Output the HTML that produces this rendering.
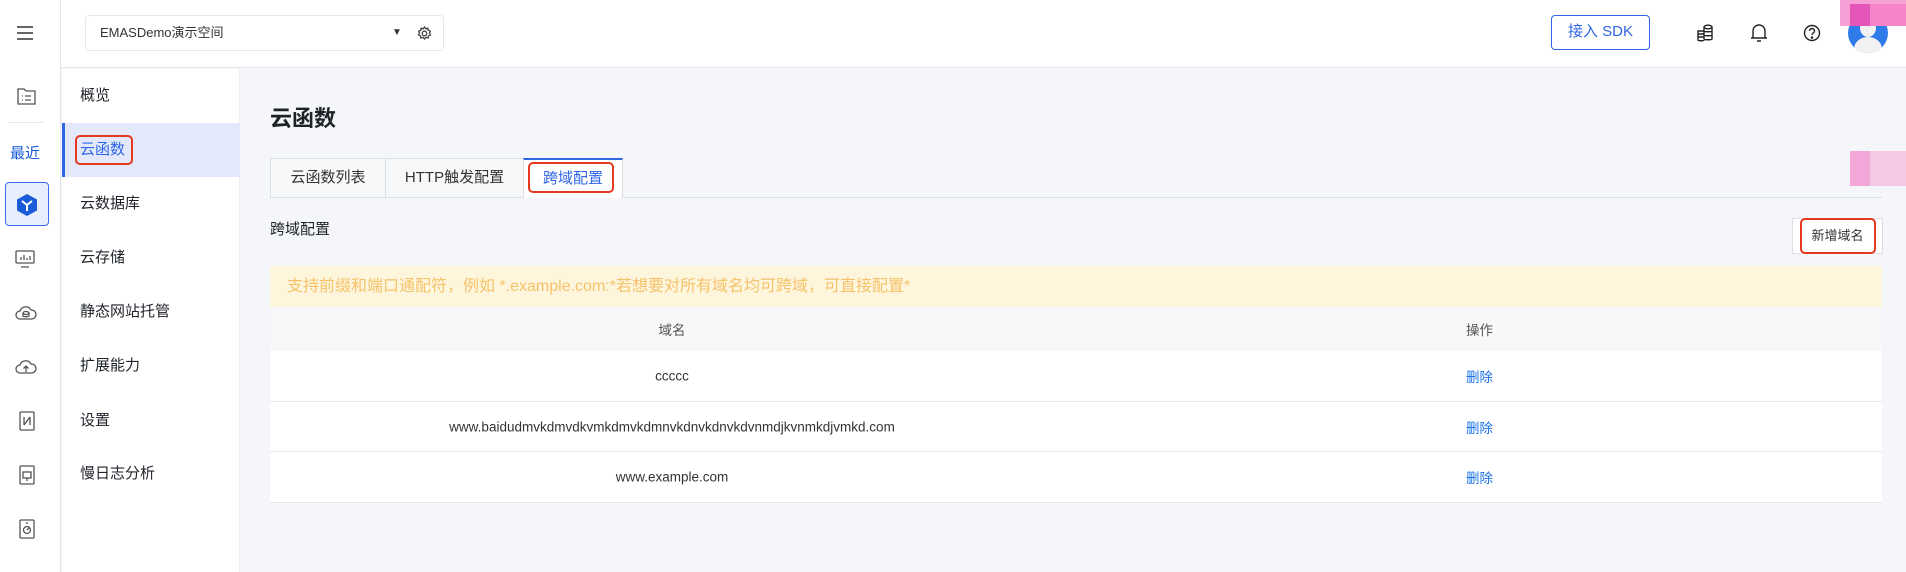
<!DOCTYPE html>
<html><head><meta charset="utf-8"><style>
*{box-sizing:border-box;margin:0;padding:0}
body{width:1906px;height:572px;overflow:hidden;background:#f5f6f9;font-family:"Liberation Sans","Noto Sans CJK SC",sans-serif;color:#1f2329;position:relative}
.abs{position:absolute}
.rail{left:0;top:0;width:61px;height:572px;background:#fff;border-right:1px solid #e3e6ec}
.top{left:61px;top:0;width:1845px;height:68px;background:#fff;border-bottom:1px solid #e3e8f0}
.sub{left:62px;top:69px;width:178px;height:503px;background:#fff;border-right:1px solid #eceef2}
.mi{position:absolute;left:18px;font-size:15px;color:#1f2329;line-height:20px}
.tab{position:absolute;top:158px;height:40px;border:1px solid #dcdfe6;background:#f7f8fa;font-size:15px;color:#333;text-align:center;line-height:38px}
.red{border:2px solid #e5391f;border-radius:5px;position:absolute}
.row{position:absolute;left:270px;width:1612px;background:#fff;border-bottom:1px solid #e8e8e8;font-size:13.5px;color:#333}
.row span{position:absolute;top:50%;transform:translateY(-50%);white-space:nowrap}
.row span.c{left:402px;transform:translate(-50%,-50%)}
.del{left:1196px;color:#1a73e8}
</style></head><body>
<div class="abs rail">
 <svg class="abs" style="left:16px;top:25px" width="18" height="16"><path d="M1 2h16M1 8h16M1 14h16" stroke="#333" stroke-width="1.6"/></svg>
 <svg class="abs" style="left:17px;top:87px" width="20" height="18" fill="none" stroke="#555" stroke-width="1.3"><path d="M1 2h6l2 2h9v13H1z"/><path d="M5 9h1M5 13h1M8 9h6M8 13h6"/></svg>
 <div class="abs" style="left:8px;top:122px;width:36px;height:1px;background:#e3e6ec"></div>
 <div class="abs" style="left:10px;top:142px;font-size:15px;color:#1a5bd8">最近</div>
 <div class="abs" style="left:5px;top:182px;width:44px;height:44px;border:1.5px solid #3a6ff0;border-radius:4px;background:#e9eefc"></div>
 <svg class="abs" style="left:16px;top:193px" width="22" height="24"><path d="M11 1l10 5.5v11L11 23 1 17.5v-11z" fill="#1a5bd8"/><path d="M6 8l5 4 5-4M11 12v6" stroke="#fff" stroke-width="2" fill="none"/></svg>
 <svg class="abs" style="left:15px;top:250px" width="20" height="18" fill="none" stroke="#555" stroke-width="1.3"><rect x="1" y="1" width="18" height="12" rx="1"/><path d="M6 17h8M6 10V7M9 10V5M12 10V8M15 10V6"/></svg>
 <svg class="abs" style="left:15px;top:304px" width="22" height="16" fill="none" stroke="#555" stroke-width="1.3"><path d="M5 15a4 4 0 010-8 6 6 0 0111-1 4 4 0 011 9z"/><ellipse cx="11" cy="9" rx="3" ry="1.5"/><path d="M8 9v3c0 1 6 1 6 0V9"/></svg>
 <svg class="abs" style="left:15px;top:358px" width="22" height="16" fill="none" stroke="#555" stroke-width="1.3"><path d="M5 15a4 4 0 010-8 6 6 0 0111-1 4 4 0 011 9z"/><path d="M11 14V8M8.5 10.5L11 8l2.5 2.5"/></svg>
 <svg class="abs" style="left:19px;top:411px" width="16" height="20" fill="none" stroke="#555" stroke-width="1.3"><rect x="1" y="1" width="14" height="18" rx="1"/><path d="M5 6v8M11 6v8M5 14l6-8"/></svg>
 <svg class="abs" style="left:19px;top:465px" width="16" height="20" fill="none" stroke="#555" stroke-width="1.3"><rect x="1" y="1" width="14" height="18" rx="1"/><rect x="4" y="7" width="8" height="6"/><path d="M8 13v3"/></svg>
 <svg class="abs" style="left:19px;top:519px" width="16" height="20" fill="none" stroke="#555" stroke-width="1.3"><rect x="1" y="1" width="14" height="18" rx="1"/><circle cx="8" cy="11" r="3.5"/><path d="M7 4h2M8 11l2-2"/></svg>
</div>
<div class="abs top">
 <div class="abs" style="left:24px;top:15px;width:359px;height:36px;border:1px solid #e4e6eb;border-radius:4px;font-size:13px;color:#333;line-height:34px;padding-left:14px">EMASDemo演示空间
  <span class="abs" style="left:306px;top:0;font-size:10px">▼</span>
  <svg class="abs" style="left:331px;top:10px" width="15" height="15" fill="none" stroke="#444" stroke-width="1.3"><circle cx="7.5" cy="7.5" r="2.3"/><path d="M7.5 1l1.3 1.8 2.1-.6.4 2.1 2 .8-.8 2 1 1.9-2 .8-.4 2.1-2.1-.5-1.5 1.6-1.5-1.6-2.1.5-.4-2.1-2-.8 1-1.9-.8-2 2-.8.4-2.1 2.1.6z"/></svg>
 </div>
 <div class="abs" style="left:1490px;top:15px;width:99px;height:35px;border:1.5px solid #2e66e6;border-radius:4px;color:#2e66e6;font-size:15px;text-align:center;line-height:32px">接入 SDK</div>
 <svg class="abs" style="left:1635px;top:24px" width="18" height="18" fill="none" stroke="#222" stroke-width="1.4"><ellipse cx="12" cy="3" rx="4" ry="1.8"/><path d="M8 3v12c0 1 8 1 8 0V3M8 7c0 1 8 1 8 0M8 11c0 1 8 1 8 0"/><path d="M8 7H2v9c0 1 6 1 6 0M2 10h6M2 13h6"/></svg>
 <svg class="abs" style="left:1689px;top:23px" width="18" height="20" fill="none" stroke="#222" stroke-width="1.4"><path d="M3 15V8a6 6 0 0112 0v7M1 15h16M7 18h4"/></svg>
 <svg class="abs" style="left:1742px;top:24px" width="18" height="18" fill="none" stroke="#222" stroke-width="1.4"><circle cx="9" cy="9" r="7.5"/><path d="M6.5 7a2.5 2.5 0 115 0c0 2-2.5 2-2.5 4"/><circle cx="9" cy="13.5" r=".6" fill="#222"/></svg>
 <div class="abs" style="left:1787px;top:13px;width:40px;height:40px;border-radius:50%;background:#2f7bea;overflow:hidden"><div class="abs" style="left:12px;top:6px;width:16px;height:18px;border-radius:50%;background:#f2f2f2"></div><div class="abs" style="left:6px;top:24px;width:28px;height:24px;border-radius:50%;background:#f2f2f2"></div></div>
</div>
<div class="abs" style="left:1840px;top:0;width:66px;height:26px;background:#f7a0d6"></div>
<div class="abs" style="left:1850px;top:4px;width:20px;height:22px;background:#e455b8"></div>
<div class="abs" style="left:1870px;top:4px;width:36px;height:22px;background:#f783c9"></div>
<div class="abs" style="left:1850px;top:151px;width:56px;height:35px;background:#f5c8e6"></div>
<div class="abs" style="left:1850px;top:151px;width:20px;height:35px;background:#f2a7d8"></div>
<div class="abs sub">
 <div class="mi" style="top:17px">概览</div>
 <div class="abs" style="left:0;top:54px;width:178px;height:54px;background:#e3e9fb;border-left:3px solid #2e66e6"></div>
 <div class="mi" style="top:71px;color:#2e66e6">云函数</div>
 <div class="red" style="left:13px;top:66px;width:58px;height:30px"></div>
 <div class="mi" style="top:125px">云数据库</div>
 <div class="mi" style="top:179px">云存储</div>
 <div class="mi" style="top:233px">静态网站托管</div>
 <div class="mi" style="top:287px">扩展能力</div>
 <div class="mi" style="top:342px">设置</div>
 <div class="mi" style="top:395px">慢日志分析</div>
</div>
<div class="abs" style="left:270px;top:101px;font-size:22px;font-weight:bold">云函数</div>
<div class="abs" style="left:270px;top:197px;width:1612px;height:1px;background:#dcdfe6"></div>
<div class="tab" style="left:270px;width:116px">云函数列表</div>
<div class="tab" style="left:385px;width:139px">HTTP触发配置</div>
<div class="tab" style="left:523px;width:100px;background:#fff;border-top:2px solid #2e66e6;border-bottom-color:#fff;color:#2e66e6">跨域配置</div>
<div class="red" style="left:528px;top:162px;width:86px;height:31px"></div>
<div class="abs" style="left:270px;top:218px;font-size:15px">跨域配置</div>
<div class="abs" style="left:1792px;top:218px;width:91px;height:36px;border:1px solid #dcdfe6;background:#fff;font-size:13px;text-align:center;line-height:34px;color:#333">新增域名</div>
<div class="red" style="left:1800px;top:218px;width:76px;height:36px"></div>
<div class="abs" style="left:270px;top:266px;width:1612px;height:41px;background:#fdf5dc;font-size:16px;color:#f6c36a;line-height:41px;padding-left:17px">支持前缀和端口通配符，例如 *.example.com:*若想要对所有域名均可跨域，可直接配置*</div>
<div class="row" style="top:307px;height:44px;background:#f7f8fa;border:0"><span class="c" style="color:#555">域名</span><span style="left:1196px;color:#555">操作</span></div>
<div class="row" style="top:351px;height:51px"><span class="c">ccccc</span><span class="del">删除</span></div>
<div class="row" style="top:402px;height:50px"><span class="c">www.baidudmvkdmvdkvmkdmvkdmnvkdnvkdnvkdvnmdjkvnmkdjvmkd.com</span><span class="del">删除</span></div>
<div class="row" style="top:452px;height:51px"><span class="c">www.example.com</span><span class="del">删除</span></div>
</body></html>
